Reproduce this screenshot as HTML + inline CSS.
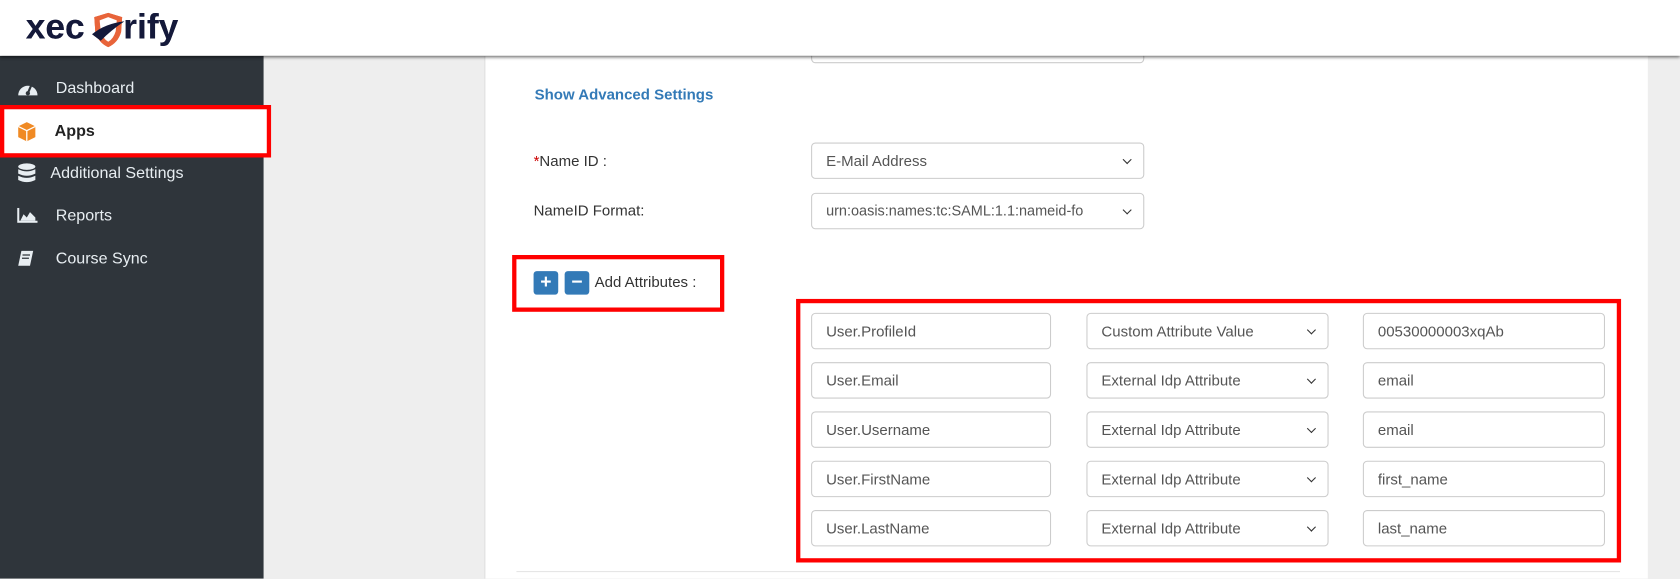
<!DOCTYPE html>
<html><head><meta charset="utf-8"><style>
html,body{margin:0;padding:0;width:1680px;height:579px;overflow:hidden;background:#eee;}
#w{position:absolute;left:0;top:0;width:1568px;height:540px;transform:scale(1.071429);transform-origin:0 0;font-family:"Liberation Sans",Arial,sans-serif;font-size:14px;color:#333;background:#eee;}
.a{position:absolute;}
.hdr{left:0;top:0;width:1568px;height:52px;background:#fff;box-shadow:0 1px 3px rgba(0,0,0,.35);z-index:2;}
.side{left:0;top:52px;width:246px;height:488px;background:#2f353b;}
.nav{position:absolute;left:0;color:#e8eef2;font-size:15px;}
.card{left:452px;top:52px;width:1085px;height:488px;background:#fff;border-left:1px solid #ddd;}
.in{position:absolute;box-sizing:border-box;height:34px;border:1px solid #ccc;border-radius:4px;background:#fff;padding-left:13px;line-height:32px;font-size:14px;color:#555;}
.sel::after{content:"";position:absolute;right:12px;top:12px;width:5px;height:5px;border-right:1.6px solid #333;border-bottom:1.6px solid #333;transform:rotate(45deg);}
.red{position:absolute;border:4px solid #f00;box-sizing:border-box;}
.btn{position:absolute;width:23px;height:22px;background:#337ab7;border-radius:3px;color:#fff;font-weight:bold;text-align:center;line-height:21px;font-size:18px;}
</style></head><body><div id="w">
<div class="a hdr">
 <div class="a" style="left:24px;top:6px;font-size:33px;font-weight:bold;color:#14193a;letter-spacing:0px;">xec<span style="display:inline-block;width:36px"></span>rify</div>
 <svg class="a" style="left:84px;top:10px" width="34" height="36" viewBox="0 0 34 36"><path d="M4 6 L17 2 L30 6 L29 20 Q26 30 17 34 Q8 30 5 20 Z" fill="#e8643a"/><path d="M9 9 L17 6 L25 9 L24 19 Q22 26 17 29 Q12 26 10 19 Z" fill="#fff"/><path d="M2 22 Q14 12 32 10 Q20 18 10 28 Z" fill="#14193a"/></svg>
</div>
<div class="a side">
 <div class="nav" style="top:22px;left:52px">Dashboard</div>
 <svg class="a" style="left:16px;top:23px" width="20" height="16" viewBox="0 0 20 16"><path d="M1 14 A9 9 0 1 1 19 14 Z" fill="#e8eef2"/><circle cx="10" cy="12" r="2" fill="#2f353b"/><path d="M10 12 L13 5" stroke="#2f353b" stroke-width="2"/></svg>
 <div class="a" style="left:0;top:46px;width:252px;height:48px;background:#fff"></div>
 <div class="red" style="left:0;top:46px;width:253px;height:49px"></div>
 <svg class="a" style="left:15px;top:61px" width="20" height="20" viewBox="0 0 20 20"><path d="M10 1 L18 5 L18 15 L10 19 L2 15 L2 5 Z" fill="#f08a24"/><path d="M2 5 L10 9 L18 5 M10 9 L10 19" stroke="#fff" stroke-width="1.2" fill="none"/></svg>
 <div class="nav" style="top:62px;left:51px;color:#222;font-weight:bold">Apps</div>
 <svg class="a" style="left:16px;top:100px" width="18" height="20" viewBox="0 0 18 20"><ellipse cx="9" cy="3.5" rx="8" ry="3" fill="#e8eef2"/><path d="M1 6 Q9 10 17 6 L17 10 Q9 14 1 10Z M1 12 Q9 16 17 12 L17 16 Q9 20 1 16Z" fill="#e8eef2"/></svg>
 <div class="nav" style="top:101px;left:47px">Additional Settings</div>
 <svg class="a" style="left:16px;top:142px" width="19" height="14" viewBox="0 0 19 14"><path d="M1 0 V13 H19" stroke="#e8eef2" stroke-width="2" fill="none"/><path d="M3 12 L6 6 L9 9 L12 4 L17 9 L17 12 Z" fill="#e8eef2"/></svg>
 <div class="nav" style="top:141px;left:52px">Reports</div>
 <svg class="a" style="left:16px;top:182px" width="16" height="15" viewBox="0 0 16 15"><path d="M4 0 H15 L12 14 H1 Z" fill="#e8eef2"/><path d="M5 4 H12 M4.5 7 H11" stroke="#2f353b" stroke-width="1.2"/></svg>
 <div class="nav" style="top:181px;left:52px">Course Sync</div>
</div>
<div class="a card"></div>
<div class="in" style="left:757px;top:30px;width:311px;height:29px"></div>
<div class="a" style="left:0;top:0;width:1568px;height:52px;background:#fff;box-shadow:0 1px 3px rgba(0,0,0,.35);z-index:1"></div>
<div class="a" style="left:24px;top:6px;font-size:33px;font-weight:bold;color:#14193a;z-index:3">xec<span style="display:inline-block;width:36px"></span>rify</div>
<svg class="a" style="left:84px;top:10px;z-index:3" width="34" height="36" viewBox="0 0 34 36"><path d="M4 6 L17 2 L30 6 L29 20 Q26 30 17 34 Q8 30 5 20 Z" fill="#e8643a"/><path d="M9 9 L17 6 L25 9 L24 19 Q22 26 17 29 Q12 26 10 19 Z" fill="#fff"/><path d="M2 22 Q14 12 32 10 Q20 18 10 28 Z" fill="#14193a"/></svg>
<div class="a" style="left:499px;top:80px;color:#337ab7;font-weight:bold;font-size:14px">Show Advanced Settings</div>
<div class="a" style="left:498px;top:142px"><span style="color:#c00">*</span>Name ID :</div>
<div class="in sel" style="left:757px;top:133px;width:311px">E-Mail Address</div>
<div class="a" style="left:498px;top:188px">NameID Format:</div>
<div class="in sel" style="left:757px;top:180px;width:311px;font-size:13.5px">urn:oasis:names:tc:SAML:1.1:nameid-fo</div>
<div class="red" style="left:478px;top:238px;width:198px;height:53px"></div>
<div class="btn" style="left:498px;top:253px">+</div>
<div class="btn" style="left:527px;top:253px">−</div>
<div class="a" style="left:555px;top:255px">Add Attributes :</div>
<div class="red" style="left:743px;top:279px;width:770px;height:246px"></div>
<div class="in" style="left:757px;top:292px;width:224px">User.ProfileId</div>
<div class="in sel" style="left:1014px;top:292px;width:226px">Custom Attribute Value</div>
<div class="in" style="left:1272px;top:292px;width:226px">00530000003xqAb</div>
<div class="in" style="left:757px;top:338px;width:224px">User.Email</div>
<div class="in sel" style="left:1014px;top:338px;width:226px">External Idp Attribute</div>
<div class="in" style="left:1272px;top:338px;width:226px">email</div>
<div class="in" style="left:757px;top:384px;width:224px">User.Username</div>
<div class="in sel" style="left:1014px;top:384px;width:226px">External Idp Attribute</div>
<div class="in" style="left:1272px;top:384px;width:226px">email</div>
<div class="in" style="left:757px;top:430px;width:224px">User.FirstName</div>
<div class="in sel" style="left:1014px;top:430px;width:226px">External Idp Attribute</div>
<div class="in" style="left:1272px;top:430px;width:226px">first_name</div>
<div class="in" style="left:757px;top:476px;width:224px">User.LastName</div>
<div class="in sel" style="left:1014px;top:476px;width:226px">External Idp Attribute</div>
<div class="in" style="left:1272px;top:476px;width:226px">last_name</div>
<div class="a" style="left:482px;top:533px;width:1030px;height:1px;background:#e5e5e5"></div>
</div></body></html>
